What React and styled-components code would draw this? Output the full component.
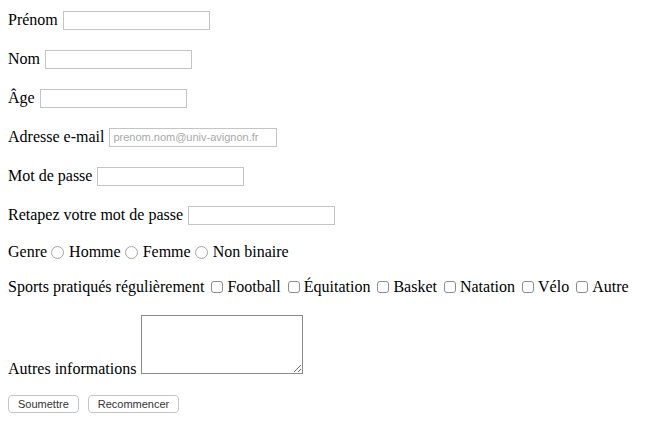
import React from 'react';
import styled, { createGlobalStyle } from 'styled-components';

const GlobalStyle = createGlobalStyle`
  body {
    margin: 0;
    background: #fff;
    color: #000;
    font-family: 'Liberation Serif', 'Times New Roman', serif;
    font-size: 16px;
  }
`;

const Form = styled.form`
  display: flex;
  flex-direction: column;
  gap: 16px;
  padding: 8px 8px;
`;

const Row = styled.div`
  line-height: ${(p) => (p.$tall ? 23 : 19)}px;
`;

const Field = styled.input`
  box-sizing: border-box;
  width: ${(p) => p.$w || 147}px;
  height: 19px;
  margin: 0 0 0 1px;
  padding: 1px 3px;
  border: 1px solid #c4c4c4;
  border-radius: 0;
  font-family: 'Liberation Sans', Arial, sans-serif;
  font-size: 11px;
  vertical-align: 1px;
  &::placeholder {
    color: #a9a9a9;
  }
`;

const Radio = styled.input`
  appearance: none;
  box-sizing: border-box;
  width: 13px;
  height: 13px;
  margin: 0 5px 0 0;
  border: 1px solid #a4a4a4;
  border-radius: 50%;
  background: #fff;
  vertical-align: -2px;
`;

const Check = styled.input`
  appearance: none;
  box-sizing: border-box;
  width: 12px;
  height: 12px;
  margin: 0 4px 0 3px;
  border: 1px solid #8c8c8c;
  border-radius: 3px;
  background: #fff;
  vertical-align: -1px;
`;

const Area = styled.textarea`
  box-sizing: border-box;
  width: 162px;
  height: 59px;
  margin: 3px 0 0 1px;
  border: 1px solid #8a8a8a;
  padding: 2px;
  vertical-align: baseline;
  resize: both;
`;

const Button = styled.button`
  box-sizing: border-box;
  height: 18px;
  margin: 0 5px 0 0;
  padding: 0 9px;
  border: 1px solid #c6c6c6;
  border-radius: 4px;
  background: #fff;
  color: #333;
  font-family: 'Liberation Sans', Arial, sans-serif;
  font-size: 11px;
  line-height: 16px;
`;

const Buttons = styled.div`
  margin-top: 0;
`;

export default function App() {
  return (
    <>
      <GlobalStyle />
      <Form>
        <Row $tall>Prénom <Field type="text" /></Row>
        <Row $tall>Nom <Field type="text" /></Row>
        <Row $tall>Âge <Field type="text" /></Row>
        <Row $tall>Adresse e-mail <Field type="email" $w={168} placeholder="prenom.nom@univ-avignon.fr" /></Row>
        <Row $tall>Mot de passe <Field type="password" /></Row>
        <Row $tall>Retapez votre mot de passe <Field type="password" /></Row>
        <Row>
          Genre <Radio type="radio" name="g" />Homme <Radio type="radio" name="g" />Femme <Radio type="radio" name="g" />Non binaire
        </Row>
        <Row>
          Sports pratiqués régulièrement <Check type="checkbox" />Football <Check type="checkbox" />Équitation <Check type="checkbox" />Basket <Check type="checkbox" />Natation <Check type="checkbox" />Vélo <Check type="checkbox" />Autre
        </Row>
        <Row>Autres informations <Area /></Row>
        <Buttons>
          <Button type="submit">Soumettre</Button> <Button type="reset">Recommencer</Button>
        </Buttons>
      </Form>
    </>
  );
}
